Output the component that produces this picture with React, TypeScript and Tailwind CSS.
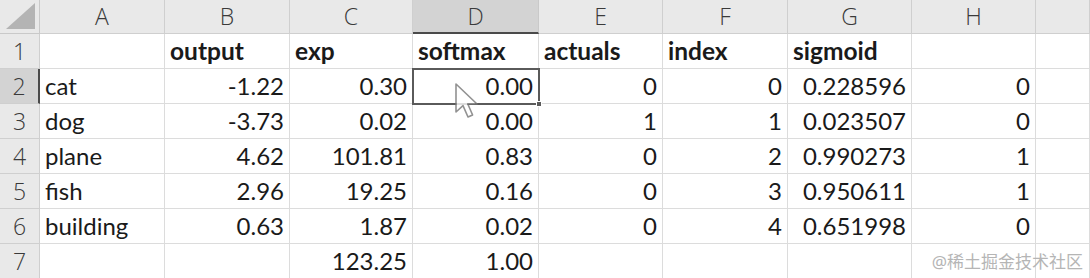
import { Fragment } from "react";

const cols = ["A", "B", "C", "D", "E", "F", "G", "H", ""];

type Cell = { v: string; bold?: boolean; right?: boolean };

const t = (v: string): Cell => ({ v });
const b = (v: string): Cell => ({ v, bold: true });
const n = (v: string): Cell => ({ v, right: true });
const e: Cell = { v: "" };

const rows: Cell[][] = [
  [e, b("output"), b("exp"), b("softmax"), b("actuals"), b("index"), b("sigmoid"), e, e],
  [t("cat"), n("-1.22"), n("0.30"), n("0.00"), n("0"), n("0"), n("0.228596"), n("0"), e],
  [t("dog"), n("-3.73"), n("0.02"), n("0.00"), n("1"), n("1"), n("0.023507"), n("0"), e],
  [t("plane"), n("4.62"), n("101.81"), n("0.83"), n("0"), n("2"), n("0.990273"), n("1"), e],
  [t("fish"), n("2.96"), n("19.25"), n("0.16"), n("0"), n("3"), n("0.950611"), n("1"), e],
  [t("building"), n("0.63"), n("1.87"), n("0.02"), n("0"), n("4"), n("0.651998"), n("0"), e],
  [e, e, n("123.25"), n("1.00"), e, e, e, e, e],
];

const headBase =
  "flex items-center justify-center text-[23px] text-[#3a3a3a] font-['Open_Sans',sans-serif] font-light";

function Cursor() {
  return (
    <svg
      className="absolute left-[41px] top-[13px] opacity-80"
      width="34"
      height="40"
      viewBox="0 0 17 20"
    >
      <path
        d="M1 1 L1 15 L4.5 11.8 L7 17.5 L9.3 16.5 L6.9 11 L11.5 11 Z"
        fill="#fff"
        stroke="#777"
        strokeWidth="0.8"
        strokeLinejoin="round"
      />
    </svg>
  );
}

export default function App() {
  return (
    <div className="relative w-[1090px] h-[278px] overflow-hidden bg-white font-['Lato',sans-serif] text-[#1a1a1a]">
      <div className="grid grid-cols-[40px_125px_125px_123px_126px_124px_125px_124px_124px_1fr] grid-rows-[34px_repeat(7,35px)]">
        {/* corner */}
        <div className="flex items-end justify-end p-[3px] bg-[#e9e9e9] border-r border-b border-[#c9c9c9]">
          <svg width="30" height="27" viewBox="0 0 30 27">
            <polygon points="29,0 29,26 0,26" fill="#b4b4b4" />
          </svg>
        </div>
        {cols.map((c, i) => (
          <div
            key={c + i}
            className={
              i === 3
                ? headBase + " bg-[#d3d3d3] border-r border-[#c9c9c9] border-b-2 border-b-[#4a4a4a]"
                : headBase + " bg-[#e9e9e9] border-r border-b border-[#cfcfcf]"
            }
          >
            {c}
          </div>
        ))}
        {rows.map((row, r) => (
          <Fragment key={"r" + r}>
            <div
              className={
                r === 1
                  ? headBase + " bg-[#d3d3d3] border-b border-[#cfcfcf] border-r-2 border-r-[#4a4a4a]"
                  : headBase + " bg-[#e9e9e9] border-r border-b border-[#cfcfcf]"
              }
            >
              {r + 1}
            </div>
            {row.map((cell, c) => {
              const active = r === 1 && c === 3;
              return (
                <div
                  key={r + "-" + c}
                  className={
                    "flex items-center px-[5px] border-r border-b border-[#dcdcdc] leading-none " +
                    (cell.right ? "justify-end " : "justify-start ") +
                    (cell.bold ? "font-bold text-[24.5px] " : "font-normal text-[24px] ") +
                    (active ? "relative outline-2 outline-[#5a5a5a] -outline-offset-1 z-10" : "")
                  }
                >
                  {cell.v}
                  {active && (
                    <>
                      <Cursor />
                      <span className="absolute -right-[4px] -bottom-[4px] w-[6px] h-[6px] bg-[#5a5a5a] border border-white" />
                    </>
                  )}
                </div>
              );
            })}
          </Fragment>
        ))}
      </div>
      <div className="absolute right-[7px] bottom-[4px] text-[17px] text-[#b5b5b5] font-['Noto_Sans','Noto_Sans_CJK_SC',sans-serif]">
        @稀土掘金技术社区
      </div>
    </div>
  );
}
